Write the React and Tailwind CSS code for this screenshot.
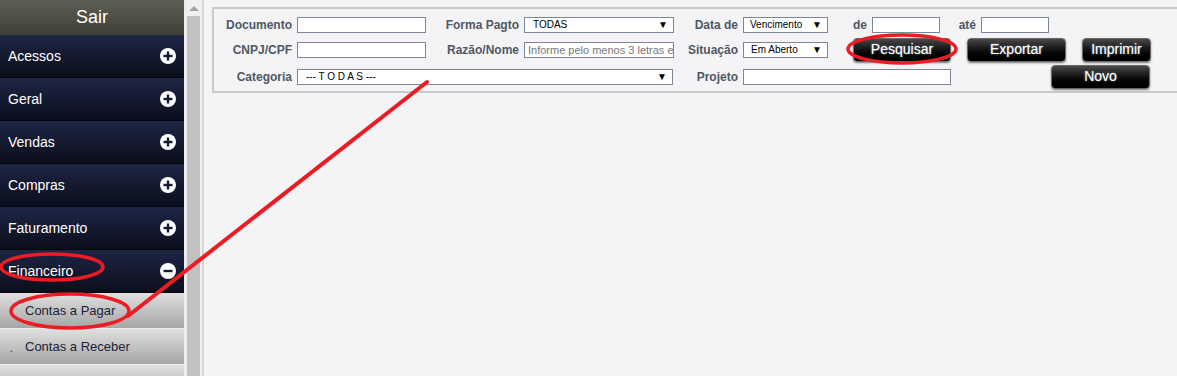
import React from "react";

const menu = ["Acessos", "Geral", "Vendas", "Compras", "Faturamento"];

function PlusIcon({ minus }) {
  return (
    <svg width="16" height="16" viewBox="0 0 16 16">
      <circle cx="8" cy="8" r="8" fill="#fff" />
      <rect x="3.5" y="6.8" width="9" height="2.4" fill="#141a30" />
      {!minus && <rect x="6.8" y="3.5" width="2.4" height="9" fill="#141a30" />}
    </svg>
  );
}

function MenuItem({ label, minus }) {
  return (
    <div className="shrink-0 h-[43px] flex items-center justify-between pl-2 pr-[8px] bg-gradient-to-b from-[#1e2646] to-[#0b0e1b] border-b border-[#05060c] text-white text-[14px]">
      <span>{label}</span>
      <PlusIcon minus={minus} />
    </div>
  );
}

function SubItem({ label, dot }) {
  return (
    <div className="shrink-0 h-[36px] flex items-center bg-gradient-to-b from-[#e0e0e0] to-[#a6a6a6] border-b border-[#ececec] text-[#1a2238] text-[13px] relative">
      {dot && <span className="absolute left-[10px] top-[12px] text-[10px]">.</span>}
      <span className="pl-[25px]">{label}</span>
    </div>
  );
}

function Label({ w, children }) {
  return (
    <div style={{ width: w }} className="shrink-0 text-right pr-[5px] font-bold text-[12px] text-[#4f5862]">
      {children}
    </div>
  );
}

function Input({ w, placeholder }) {
  return (
    <div
      style={{ width: w }}
      className="shrink-0 h-[16px] bg-white border border-[#7b8796] text-[11px] text-[#777] leading-[14px] pl-[3px] overflow-hidden whitespace-nowrap"
    >
      {placeholder}
    </div>
  );
}

function Select({ w, text, pl = "pl-[8px]" }) {
  return (
    <div
      style={{ width: w }}
      className={`shrink-0 h-[16px] bg-white border border-[#7b8796] flex items-center justify-between ${pl} pr-[5px] text-[10px] text-black`}
    >
      <span>{text}</span>
      <span className="text-[10px]">▼</span>
    </div>
  );
}

function Btn({ w, children, ml }) {
  return (
    <div
      style={{ width: w, marginLeft: ml }}
      className="shrink-0 h-[24px] rounded-[4px] border border-[#6a6a6a] bg-gradient-to-b from-[#4a4a4a] via-[#111] to-[#000] shadow-[0_1px_2px_rgba(0,0,0,0.5)] flex items-center justify-center text-white text-[14px] [text-shadow:0_0_2px_#9ab]"
    >
      {children}
    </div>
  );
}

export default function App() {
  return (
    <div className="relative w-[1177px] h-[376px] overflow-hidden flex bg-[#f4f4f7] font-['Liberation_Sans',Arial,sans-serif]">
      {/* Sidebar */}
      <div className="w-[184px] shrink-0 flex flex-col overflow-hidden">
        <div className="shrink-0 h-[35px] flex items-center justify-center bg-gradient-to-b from-[#5e5e55] to-[#3f3f37] text-white text-[18px]">
          Sair
        </div>
        {menu.map((m) => (
          <MenuItem key={m} label={m} />
        ))}
        <MenuItem label="Financeiro" minus />
        <SubItem label="Contas a Pagar" />
        <SubItem label="Contas a Receber" dot />
        <SubItem label="" />
      </div>
      {/* Scrollbar */}
      <div className="shrink-0 w-[3px] bg-[#ececec]" />
      <div className="shrink-0 w-[13px] bg-[#f0f0f0] flex flex-col items-center">
        <div className="h-[16px] flex items-center justify-center">
          <div className="w-0 h-0 border-l-[5px] border-r-[5px] border-b-[5px] border-l-transparent border-r-transparent border-b-[#a3a3a3]" />
        </div>
        <div className="flex-1 w-full bg-[#c1c1c1]" />
      </div>
      <div className="shrink-0 w-[2px] bg-[#f0f0f0]" />
      <div className="shrink-0 w-[2px] bg-[#d4d4d4]" />
      {/* Main */}
      <div className="flex-1 min-w-0 overflow-hidden pl-[8px] pt-[7px]">
        <div className="w-[1000px] shrink-0 border-2 border-[#cacaca] pt-[3px] pb-[2px]">
          {/* Row 1 */}
          <div className="h-[25px] flex items-center">
            <Label w={83}>Documento</Label>
            <Input w={129} />
            <Label w={98}>Forma Pagto</Label>
            <Select w={150} text="TODAS" />
            <Label w={69}>Data de</Label>
            <Select w={85} text="Vencimento" pl="pl-[6px]" />
            <Label w={44}>de</Label>
            <Input w={68} />
            <Label w={41}>até</Label>
            <Input w={68} />
          </div>
          {/* Row 2 */}
          <div className="h-[25px] flex items-center">
            <Label w={83}>CNPJ/CPF</Label>
            <Input w={129} />
            <Label w={98}>Razão/Nome</Label>
            <Input w={150} placeholder="Informe pelo menos 3 letras e" />
            <Label w={69}>Situação</Label>
            <Select w={85} text="Em Aberto" pl="pl-[7px]" />
            <Btn w={98} ml={25}>Pesquisar</Btn>
            <Btn w={99} ml={16}>Exportar</Btn>
            <Btn w={69} ml={16}>Imprimir</Btn>
          </div>
          {/* Row 3 */}
          <div className="h-[27px] pt-[2px] flex items-center">
            <Label w={83}>Categoria</Label>
            <Select w={376} text="--- T O D A S ---" />
            <Label w={70}>Projeto</Label>
            <Input w={208} />
            <Btn w={99} ml={100}>Novo</Btn>
          </div>
        </div>
      </div>
      {/* Red annotations */}
      <svg className="absolute inset-0 pointer-events-none" width="1177" height="376">
        <g fill="none" stroke="#ec1c24" strokeWidth="3.5">
          <ellipse cx="902" cy="49" rx="54" ry="14" />
          <ellipse cx="52" cy="267" rx="51" ry="13" />
          <ellipse cx="70" cy="311" rx="59" ry="17" />
          <line x1="427" y1="82" x2="128" y2="316" strokeWidth="4" strokeLinecap="round" />
        </g>
      </svg>
    </div>
  );
}
